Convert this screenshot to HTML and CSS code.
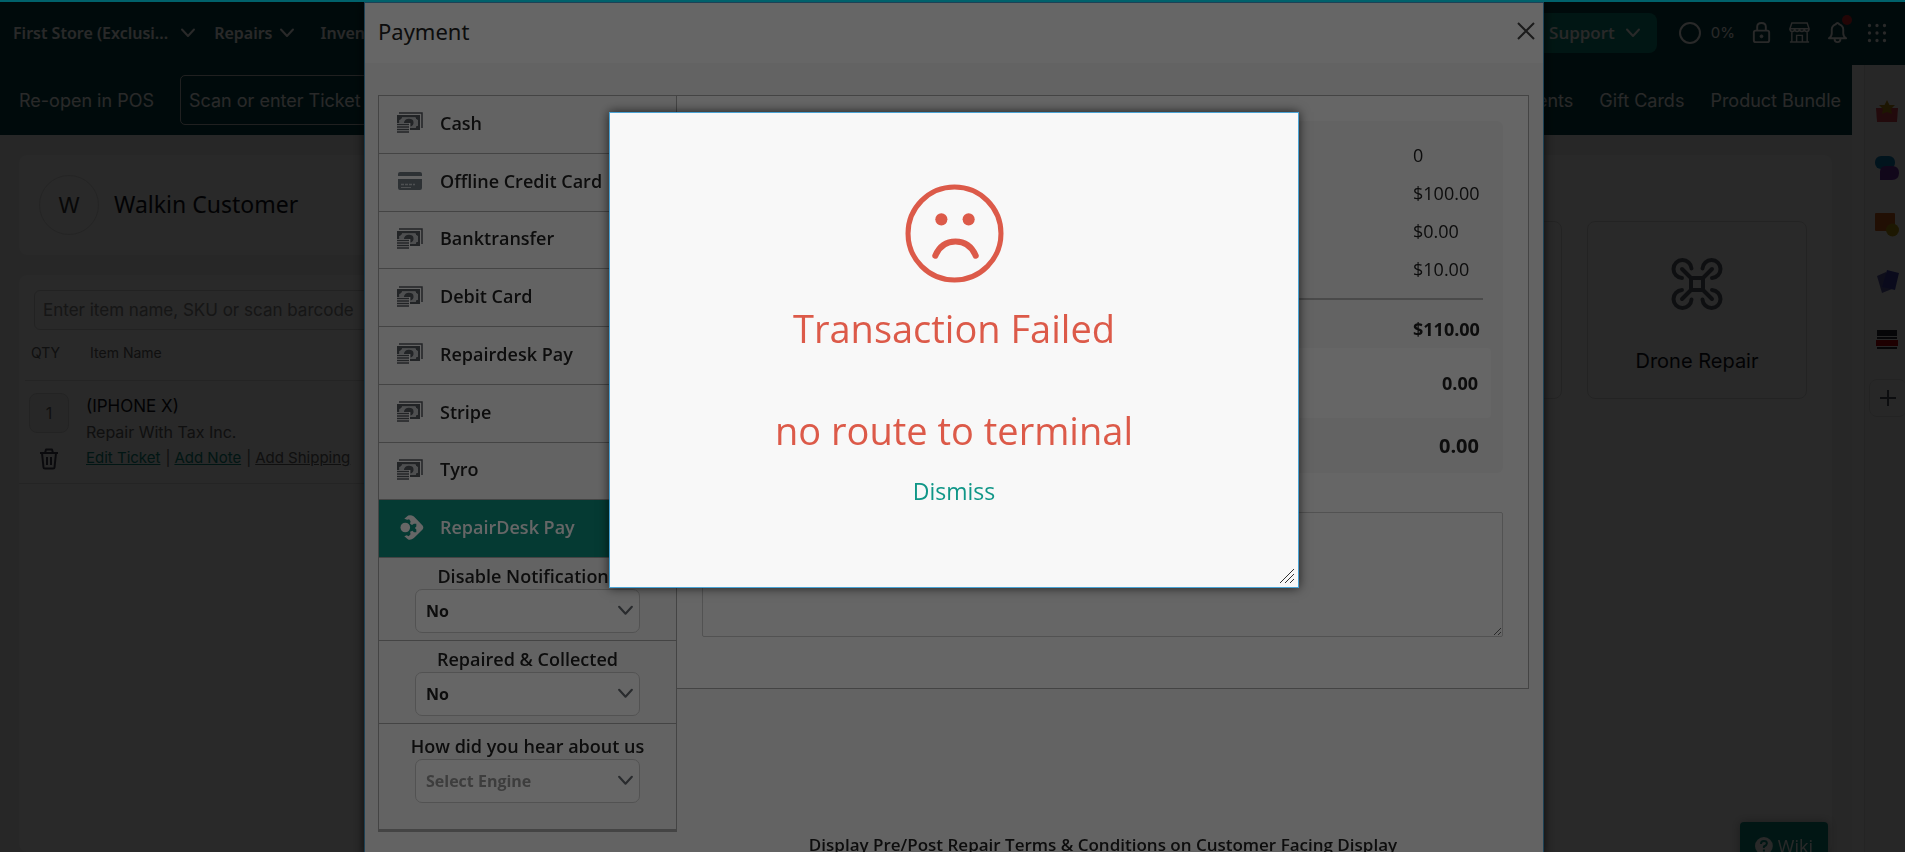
FILE: index.html
```html
<!DOCTYPE html>
<html lang="en">

<head>
    <meta charset="UTF-8">
    <meta name="viewport" content="width=device-width, initial-scale=1.0">
    <title>Point of Sale - Payment</title>
    <link rel="stylesheet" href="styles.css">
</head>

<body>
    <!-- shared icons -->
    <svg width="0" height="0" class="defs" aria-hidden="true">
        <symbol id="chev" viewBox="0 0 16 16">
            <path d="M2 4.500l6 6.500 6-6.500" fill="none" stroke="currentColor" stroke-width="2" stroke-linecap="round" stroke-linejoin="round" />
        </symbol>
        <symbol id="cash" viewBox="0 0 26 21">
            <path d="M2 1h23v15" fill="none" stroke="currentColor" stroke-width="1.500" />
            <path fill-rule="evenodd" fill="currentColor" d="M0 3h23v15H13v-2h5.500c0-1.500 1-2.500 2.500-2.500V8c-1.500 0-2.500-1-2.500-2.500H5C5 7 4 8 2.500 8v3H0z" />
            <path d="M5 5.500h13.500C18.500 7 19.500 8 21 8v5.500c-1.500 0-2.500 1-2.500 2.500H13v-5H2.500V8C4 8 5 7 5 5.500z" fill="#c4c6c8" />
            <path d="M7 11c0-5.500 9.500-5.500 9.500-1 .3 2.500-1 4-3 4.500V11z" fill="currentColor" />
            <path d="M0 12.500h12M0 15h12M0 17.500h12M0 20h12" stroke="currentColor" stroke-width="1.400" />
        </symbol>
        <symbol id="card" viewBox="0 0 24 18">
            <path d="M0 4V2Q0 0 2 0h20q2 0 2 2v2zM0 7h24v9q0 2-2 2H2q-2 0-2-2z" fill="currentColor" />
            <path d="M3 12.500h14" stroke="#c4c9ce" stroke-width="1.500" stroke-dasharray="3 1" />
            <path d="M3 15.500h10" stroke="#c4c9ce" stroke-width="1" />
        </symbol>
        <symbol id="rdpay" viewBox="0 0 24 26">
            <circle cx="5" cy="13" r="5" fill="currentColor" />
            <path fill="currentColor" d="M4 4l4-3.500q3-1 6 1l9 9.500q1.500 2 0 4l-9 9q-3 2.500-6 1.500L4 22l2.500-1 2 1 2-2-.5-2.500 2.500-1 1.500 1.500h2.500v-3l-1.500-1.500 1.500-1.500v-3h-2.500L12 10.500l-2-1.500.5-2.500L9 4.500 7 5z" />
        </symbol>
    </svg>

    <header class="topbar">
        <nav class="menu">
            <a href="#">First Store (Exclusi...<svg class="chev store-chev"><use href="#chev" /></svg></a>
            <a href="#">Repairs<svg class="chev"><use href="#chev" /></svg></a>
            <a href="#">Inventory<svg class="chev"><use href="#chev" /></svg></a>
        </nav>
        <div class="tools">
            <button class="support">Support<svg class="chev"><use href="#chev" /></svg></button>
            <span class="progress"><i class="ring"></i>0%</span>
            <svg class="tool" viewBox="0 0 24 24" fill="none" stroke="currentColor" stroke-width="2">
                <rect x="4" y="10" width="16" height="12" rx="2" />
                <path d="M7.500 10V6q0-4 4.500-4t4.500 4v4" />
                <circle cx="12" cy="16" r="1.500" fill="currentColor" stroke-width="1" />
            </svg>
            <svg class="tool" viewBox="0 0 24 24" fill="none" stroke="currentColor" stroke-width="1.500">
                <path d="M4 2h16l2 6H2zM2 8q0 3 2.500 3T7 8q0 3 2.500 3T12 8q0 3 2.500 3T17 8q0 3 2.500 3T22 8M4 11v11M20 11v11M2 22h20M9 22v-7h6v7" />
            </svg>
            <span class="bell">
                <svg class="tool" viewBox="0 0 24 24" fill="none" stroke="currentColor" stroke-width="2">
                    <path d="M3 18h18q-3-2-3-5V9q0-4-4-5.500Q13 2 12 2t-2 1.500Q6 5 6 9v4q0 3-3 5zM9 19q0 3 3 3t3-3" stroke-linejoin="round" />
                </svg>
                <i class="dot"></i>
            </span>
            <svg class="tool" viewBox="0 0 24 24" fill="none" stroke="currentColor" stroke-width="4" stroke-linecap="round">
                <path d="M3 3h0M12 3h0M21 3h0M3 12h0M12 12h0M21 12h0M3 21h0M12 21h0M21 21h0" />
            </svg>
        </div>
    </header>

    <div class="page">
        <main>
            <div class="subbar">
                <a href="#">Re-open in POS</a>
                <input type="text" class="ticket" aria-label="Ticket ID" placeholder="Scan or enter Ticket ID">
                <nav class="links">
                    <a href="#">Payments</a>
                    <a href="#">Gift Cards</a>
                    <a href="#">Product Bundle</a>
                </nav>
            </div>
            <div class="content">
                <section class="cart">
                    <div class="panel customer">
                        <span class="avatar">W</span>
                        <h2>Walkin Customer</h2>
                    </div>
                    <div class="panel items">
                        <input type="text" class="search" aria-label="Item" placeholder="Enter item name, SKU or scan barcode">
                        <div class="row head"><span>QTY</span><span>Item Name</span></div>
                        <div class="row item">
                            <div class="qty">
                                <button class="count">1</button>
                                <button class="trash" aria-label="Remove">
                                    <svg viewBox="0 0 20 22" fill="none" stroke="currentColor" stroke-width="2">
                                        <path d="M1 5h18M6 5l1-3.500h6L14 5M3 5l1.500 14.500q0 1 1.500 1h8q1.500 0 1.500-1L17 5M8 9v8M12 9v8" stroke-linejoin="round" />
                                    </svg>
                                </button>
                            </div>
                            <div class="detail">
                                <p class="name">(IPHONE X)</p>
                                <p class="type">Repair With Tax Inc.</p>
                                <p class="actions"><a href="#">Edit Ticket</a><span>|</span><a href="#">Add Note</a><span>|</span><a href="#" class="plain">Add Shipping</a></p>
                            </div>
                        </div>
                    </div>
                </section>
                <section class="panel catalog">
                    <div class="product"></div>
                    <div class="product">
                        <svg viewBox="0 0 52 52" fill="none" stroke="currentColor" stroke-width="4" stroke-linecap="round" stroke-linejoin="round">
                            <path d="M20 20h12v12H20zM20 20l-9-9M32 20l9-9M20 32l-9 9M32 32l9 9" />
                            <path d="M11 20a9 9 0 1 1 9.500-9.500M41 20a9 9 0 1 0-9.500-9.500M11 32a9 9 0 1 0 9.500 9.500M41 32a9 9 0 1 1-9.500 9.500" />
                        </svg>
                        <span>Drone Repair</span>
                    </div>
                </section>
            </div>
        </main>
        <div class="track"></div>
        <aside class="apps">
            <svg viewBox="0 0 24 24"><path d="M1 9h22l-1 14H2z" fill="#d8404c" /><path d="M12 1l2.500 5H20l-4 4 1 5-5-2-5 2 1-5-4-4h5.500z" fill="#b98a10" /></svg>
            <svg viewBox="0 0 24 24"><rect width="20" height="13" rx="6" fill="#0c7fb8" /><path d="M5 24V16q0-6 6-6h6q7 0 7 7t-7 7z" fill="#6f2da8" /></svg>
            <svg viewBox="0 0 24 24"><rect width="20" height="18" rx="1" fill="#d0601f" /><circle cx="17.500" cy="17" r="6.500" fill="#b89a10" /></svg>
            <svg viewBox="0 0 24 24"><path d="M2 6l9-4 6 17-10 4z" fill="#5d5aa8" /><path d="M12 0l12 3-4 17-13-3z" fill="#3f45b0" /></svg>
            <svg viewBox="0 0 24 24"><path d="M2 3h20v6H2zM2 10h20v2H2zM2 20h20v2H2z" fill="#2b2b33" /><path d="M1 13h22v6H1z" fill="#c0000c" /></svg>
            <button aria-label="Add app"><svg viewBox="0 0 24 24" stroke="#4d5560" stroke-width="2"><path d="M12 4v16M4 12h16" /></svg></button>
        </aside>
    </div>

    <button class="wiki">
        <svg viewBox="0 0 18 18"><circle cx="9" cy="9" r="9" fill="currentColor" /><path d="M6 7q0-3 3-3t3 2.500Q12 8 9 9.500v1.500M9 12.500v2" fill="none" stroke="#0a8f7f" stroke-width="2" /></svg>
        Wiki
    </button>

    <div class="overlay">
        <div class="modal">
            <div class="modal-head">
                <h1>Payment</h1>
                <button class="close" aria-label="Close">
                    <svg viewBox="0 0 18 18" stroke="currentColor" stroke-width="2"><path d="M1 1l16 16M17 1L1 17" /></svg>
                </button>
            </div>
            <div class="modal-body">
                <div class="side">
                    <div class="methods">
                        <button><svg class="icon"><use href="#cash" /></svg>Cash</button>
                        <button><svg class="icon card"><use href="#card" /></svg>Offline Credit Card</button>
                        <button><svg class="icon"><use href="#cash" /></svg>Banktransfer</button>
                        <button><svg class="icon"><use href="#cash" /></svg>Debit Card</button>
                        <button><svg class="icon"><use href="#cash" /></svg>Repairdesk Pay</button>
                        <button><svg class="icon"><use href="#cash" /></svg>Stripe</button>
                        <button><svg class="icon"><use href="#cash" /></svg>Tyro</button>
                        <button class="active"><svg class="icon"><use href="#rdpay" /></svg>RepairDesk Pay</button>
                    </div>
                    <div class="option">
                        <label for="notify">Disable Notifications</label>
                        <div class="select">
                            <select id="notify"><option>No</option><option>Yes</option></select>
                            <svg class="chev"><use href="#chev" /></svg>
                        </div>
                    </div>
                    <div class="option">
                        <label for="collected">Repaired &amp; Collected</label>
                        <div class="select">
                            <select id="collected"><option>No</option><option>Yes</option></select>
                            <svg class="chev"><use href="#chev" /></svg>
                        </div>
                    </div>
                    <div class="option last">
                        <label for="engine">How did you hear about us</label>
                        <div class="select">
                            <select id="engine" class="empty"><option>Select Engine</option></select>
                            <svg class="chev"><use href="#chev" /></svg>
                        </div>
                    </div>
                </div>
                <div class="main">
                    <div class="form">
                        <div class="summary">
                            <ul class="lines">
                                <li>0</li>
                                <li>$100.00</li>
                                <li>$0.00</li>
                                <li>$10.00</li>
                            </ul>
                            <div class="total"><span>$110.00</span></div>
                            <div class="paid">0.00</div>
                            <div class="due">0.00</div>
                        </div>
                        <textarea aria-label="Notes"></textarea>
                    </div>
                    <p class="terms">Display Pre/Post Repair Terms &amp; Conditions on Customer Facing Display</p>
                </div>
            </div>
        </div>
    </div>

    <div class="overlay front">
        <div class="alert" role="alertdialog" aria-label="Transaction Failed">
            <svg class="face" viewBox="0 0 98 98" fill="none" stroke="#dc5a49" stroke-width="5">
                <circle cx="49" cy="49" r="46" />
                <g fill="#dc5a49" stroke="none"><circle cx="36" cy="35" r="6" /><circle cx="63" cy="35" r="6" /></g>
                <path d="M30 71q6-14 20-14t20 14" stroke-width="6" stroke-linecap="round" />
            </svg>
            <h2>Transaction Failed</h2>
            <h2>no route to terminal</h2>
            <a href="#">Dismiss</a>
            <svg class="grip" viewBox="0 0 14 14" stroke="#333" stroke-width="1"><path d="M0 14L14 0M5 14l9-9M10 14l4-4" /></svg>
        </div>
    </div>
    <div class="loader"></div>
</body>

</html>
```

FILE: styles.css
```css
* {
    box-sizing: border-box;
}

body {
    margin: 0;
    height: 100vh;
    overflow: hidden;
    display: flex;
    flex-direction: column;
    background-color: #f2f2f2;
    font-family: Inter, "Liberation Sans", sans-serif;
    font-size: 16px;
    color: #10131a;
}

h1,
h2,
p,
ul {
    margin: 0;
    padding: 0;
    font-weight: 400;
}

a {
    color: inherit;
    text-decoration: none;
}

button {
    font: inherit;
    color: inherit;
    border: none;
    background: none;
    padding: 0;
}

svg {
    display: block;
}

.defs {
    position: absolute;
}

.chev {
    width: 16px;
    height: 16px;
}

/* top bar */
.topbar {
    display: flex;
    justify-content: space-between;
    align-items: center;
    height: 65px;
    flex: none;
    padding: 0 16px 0 13px;
    background-color: #054247;
    color: #fff;
}

.menu {
    display: flex;
    gap: 26px;
    font-family: "Noto Sans", sans-serif;
    font-weight: 600;
}

.menu a {
    display: flex;
    align-items: center;
    gap: 6px;
}

.menu .store-chev {
    margin-left: 6px;
    margin-right: -8px;
}

.tools {
    display: flex;
    align-items: center;
}

.support {
    display: flex;
    align-items: center;
    gap: 10px;
    height: 40px;
    padding: 0 16px;
    margin-right: 22px;
    border-radius: 8px;
    background-color: #0b8d7d;
    font-family: "Open Sans", sans-serif;
    font-size: 17px;
    font-weight: 600;
}

.progress {
    display: flex;
    align-items: center;
    gap: 10px;
    margin-right: 15px;
    font-size: 15px;
}

.ring {
    width: 22px;
    height: 22px;
    border: 2px solid #fff;
    border-radius: 50%;
}

.tool {
    width: 23px;
    height: 23px;
    margin-right: 15px;
}

.tools > .tool:last-child {
    width: 20px;
    height: 20px;
    margin: 0 2px 0 3px;
}

.bell {
    position: relative;
}

.dot {
    position: absolute;
    top: -6px;
    right: 12px;
    width: 10px;
    height: 10px;
    border-radius: 50%;
    background-color: #d9252b;
}

/* page */
.page {
    display: flex;
    flex: 1;
    min-height: 0;
}

main {
    flex: 1;
    display: flex;
    flex-direction: column;
}

.subbar {
    display: flex;
    align-items: center;
    height: 70px;
    padding: 0 11px 0 19px;
    gap: 26px;
    background-color: #054247;
    color: #fff;
    font-size: 18px;
}

.ticket {
    height: 50px;
    width: 300px;
    padding: 0 8px;
    border: 1px solid #ccc;
    border-radius: 5px;
    background: none;
    color: #fff;
    font: inherit;
}

.ticket::placeholder {
    color: #fff;
    opacity: 1;
}

.links {
    display: flex;
    gap: 26px;
    margin-left: auto;
}

.content {
    flex: 1;
    display: flex;
    gap: 20px;
    padding: 20px 20px 0 19px;
}

.panel {
    background-color: #fff;
    border-radius: 8px;
}

.cart {
    width: 40%;
    display: flex;
    flex-direction: column;
    gap: 20px;
}

.customer {
    display: flex;
    align-items: center;
    gap: 15px;
    height: 100px;
    padding: 0 20px;
}

.customer h2 {
    padding-bottom: 2px;
    font-family: "Noto Sans", sans-serif;
    font-size: 23px;
}

.avatar {
    display: flex;
    align-items: center;
    justify-content: center;
    width: 60px;
    height: 60px;
    border: 1px solid #e2e2e2;
    border-radius: 50%;
    font-size: 22px;
    color: #333;
}

.items {
    flex: 1;
    padding-top: 15px;
}

.search {
    width: 600px;
    height: 40px;
    margin-left: 15px;
    padding: 0 8px;
    border: 1px solid #d6d6d6;
    border-radius: 6px;
    font: inherit;
    font-size: 17px;
    background: none;
}

.search::placeholder {
    color: #8b8b8b;
    opacity: 1;
}

.row {
    display: flex;
    border-bottom: 1px solid #e2e2e2;
}

.head {
    height: 51px;
    margin-left: 6px;
    padding: 14px 6px;
    gap: 30px;
    font-size: 14px;
    line-height: 18px;
    color: #666;
}

.item {
    height: 103px;
    padding: 12px 10px;
    gap: 17px;
}

.qty {
    display: flex;
    flex-direction: column;
    align-items: center;
    gap: 15px;
}

.count {
    width: 40px;
    height: 40px;
    border: 1px solid #ddd;
    border-radius: 8px;
    background-color: #f4f4f4;
    color: #666;
}

.trash {
    width: 20px;
    color: #445;
}

.detail p {
    line-height: 26px;
}

.name {
    font-size: 17px;
}

.type {
    color: #666;
}

.actions {
    font-size: 15px;
    color: #666;
}

.actions a {
    color: #0b8d7d;
    text-decoration: underline;
}

.actions .plain {
    color: #666;
}

.actions span {
    margin: 0 4px 0 5px;
}

.catalog {
    flex: 1;
    display: flex;
    justify-content: flex-end;
    align-items: flex-start;
    gap: 25px;
    padding: 66px 25px;
}

.product {
    display: flex;
    flex-direction: column;
    align-items: center;
    gap: 39px;
    width: 220px;
    height: 178px;
    padding-top: 36px;
    border: 1px solid #dedede;
    border-radius: 8px;
    font-size: 20px;
}

.product svg {
    width: 52px;
    height: 52px;
    color: #5c636d;
}

.track {
    width: 13px;
    background-color: #fafafa;
    border-right: 1px solid #e4e4e4;
}

.apps {
    width: 40px;
    padding: 34px 0 0 10px;
    display: flex;
    flex-direction: column;
    gap: 33px;
    background-color: #f8f8f8;
}

.apps svg {
    width: 24px;
    height: 24px;
}

.apps button {
    width: 38px;
    height: 38px;
    margin: -5px 0 0 -6px;
    padding: 0 6px;
    border: 1px solid #ddd;
    border-radius: 8px;
}

.wiki {
    position: fixed;
    right: 77px;
    bottom: -18px;
    display: flex;
    align-items: center;
    gap: 5px;
    width: 88px;
    height: 48px;
    padding: 0 15px;
    border-radius: 4px;
    background-color: #0a8f7f;
    color: #fff;
    font-family: "Open Sans", sans-serif;
    font-size: 18px;
    box-shadow: 0 0 8px rgba(0, 0, 0, .3);
}

.wiki svg {
    width: 18px;
    height: 18px;
}

/* dialogs */
.overlay {
    position: fixed;
    inset: 0;
    display: flex;
    justify-content: center;
    align-items: flex-start;
    padding: 2px 0 0 3px;
    background-color: rgba(0, 0, 0, .6);
    font-family: "Open Sans", sans-serif;
}

.loader {
    position: fixed;
    inset: 0 0 auto;
    height: 2px;
    background-color: #00616b;
}

.modal {
    width: 1180px;
    max-width: 100%;
    min-height: 100vh;
    border: 1px solid #4aa3d5;
    background-color: #f7f7f7;
    box-shadow: 0 0 10px rgba(0, 0, 0, .7);
    color: #222;
}

.modal-head {
    display: flex;
    justify-content: space-between;
    align-items: center;
    height: 60px;
    padding: 0 8px 4px 13px;
    background-color: #fff;
}

.modal-head h1 {
    font-family: "Noto Sans", sans-serif;
    font-size: 22px;
}

.close {
    color: #444;
}

.close svg {
    width: 18px;
    height: 18px;
}

.modal-body {
    display: flex;
    align-items: flex-start;
    padding: 32px 14px 0 13px;
}

.side {
    width: 299px;
    flex: none;
    border: 1px solid #aaa;
    border-bottom-width: 2px;
    font-size: 18px;
    font-weight: 600;
}

.methods {
    display: grid;
    grid-template-rows: repeat(8, 1fr);
    height: 462px;
}

.methods button {
    display: flex;
    align-items: center;
    gap: 17px;
    padding: 0 18px 3px;
    border-bottom: 1px solid #aaa;
}

.icon {
    width: 26px;
    height: 21px;
    color: #555a60;
}

.icon.card {
    height: 18px;
    color: #717a83;
}

.methods .active {
    padding-left: 20px;
    gap: 15px;
    background-color: #0d9180;
    color: #fff;
}

.active .icon {
    height: 25px;
    color: #fff;
}

.option {
    display: flex;
    flex-direction: column;
    align-items: center;
    gap: 1px;
    height: 83px;
    padding-top: 6px;
    border-bottom: 1px solid #aaa;
}

.option label {
    line-height: 24px;
}

.option.last {
    height: 106px;
    padding-top: 10px;
}

.select {
    position: relative;
    width: 225px;
}

.select select {
    width: 100%;
    height: 44px;
    padding: 0 10px;
    appearance: none;
    border: 1px solid #ccc;
    border-radius: 7px;
    background-color: #fff;
    color: #222;
    font: inherit;
    font-size: 16px;
    font-weight: 700;
}

.select .empty {
    color: #999;
}

.select .chev {
    position: absolute;
    right: 6px;
    top: 13px;
    width: 17px;
    height: 17px;
    color: #666b72;
}

.main {
    flex: 1;
    font-size: 18px;
}

.form {
    padding: 25px;
    height: 594px;
    border: 1px solid #aaa;
    border-left: none;
    background-color: #fff;
}

.summary {
    height: 352px;
    padding: 15px 12px 0;
    border-radius: 6px;
    background-color: #f7f7f7;
}

.lines {
    list-style: none;
    margin: 0 8px;
    padding-bottom: 10px;
    border-bottom: 2px solid #b8b8b8;
}

.lines li,
.total span {
    display: block;
    width: 70px;
    margin-left: auto;
    line-height: 38px;
}

.total {
    margin: 0 8px;
    padding: 10px 0 0;
    font-weight: 700;
}

.paid,
.due {
    text-align: right;
    font-weight: 700;
}

.paid {
    height: 70px;
    padding-right: 13px;
    border-radius: 4px;
    background-color: #fff;
    line-height: 70px;
}

.due {
    padding-right: 12px;
    font-size: 20px;
    line-height: 56px;
}

textarea {
    display: block;
    width: 100%;
    height: 125px;
    margin-top: 39px;
    border: 1px solid #ccc;
    border-radius: 2px;
    background-color: #fff;
}

.terms {
    margin-top: 144px;
    text-align: center;
    font-size: 17px;
    font-weight: 600;
    line-height: 24px;
}

.front {
    padding-top: 112px;
}

.alert {
    position: relative;
    display: flex;
    flex-direction: column;
    align-items: center;
    width: 690px;
    height: 476px;
    padding-top: 71px;
    border: 1px solid #4aa3d5;
    background-color: #f8f8f8;
    box-shadow: 0 0 10px rgba(0, 0, 0, .7);
    color: #dc5a49;
}

.face {
    width: 99px;
    height: 99px;
    margin-bottom: 19px;
}

.alert h2 {
    margin-bottom: 50px;
    font-size: 38px;
    line-height: 52px;
}

.alert h2 + h2 {
    margin-bottom: 20px;
}

.alert a {
    font-size: 23px;
    line-height: 30px;
    color: #0f9687;
}

.grip {
    position: absolute;
    right: 4px;
    bottom: 4px;
    width: 14px;
    height: 14px;
}
```
